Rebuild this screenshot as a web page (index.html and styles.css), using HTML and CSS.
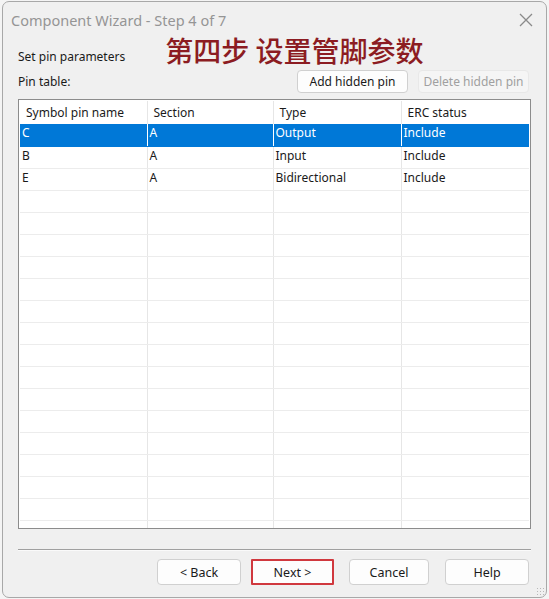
FILE: index.html
```html
<!DOCTYPE html>
<html lang="en">
  <head>
    <meta charset="UTF-8" />
    <title>Component Wizard</title>
    <link rel="stylesheet" href="styles.css">
  </head>

  <body>
    <section class="vindue">
      <header class="titellinje">
        <span class="titel">Component Wizard - Step 4 of 7</span>
        <svg class="luk" width="14" height="14" viewBox="0 0 14 14">
          <path d="M1 1 L13 13 M13 1 L1 13" stroke="#8a8a8a" stroke-width="1.3" fill="none" />
        </svg>
      </header>

      <div class="indhold">
        <div class="trin">
          <span>Set pin parameters</span>
          <h1>第四步 设置管脚参数</h1>
        </div>

        <div class="tabelhoved">
          <span>Pin table:</span>
          <div class="knapper">
            <button class="knap">Add hidden pin</button>
            <button class="knap" disabled>Delete hidden pin</button>
          </div>
        </div>

        <div class="tabel">
          <table>
            <thead>
              <tr>
                <th>Symbol pin name</th>
                <th>Section</th>
                <th>Type</th>
                <th>ERC status</th>
              </tr>
            </thead>
            <tbody></tbody>
          </table>
        </div>

        <hr />

        <footer>
          <button class="knap tilbage">&lt; Back</button>
          <button class="knap naeste">Next &gt;</button>
          <button class="knap annuller">Cancel</button>
          <button class="knap">Help</button>
        </footer>
      </div>
      <div class="greb"></div>
    </section>

    <script>
      const pins = [
        ["C", "A", "Output", "Include"],
        ["B", "A", "Input", "Include"],
        ["E", "A", "Bidirectional", "Include"],
      ];

      const tbody = document.querySelector("tbody");
      for (let i = 0; i < 19; i++) {
        const tr = document.createElement("tr");
        if (i == 0) tr.classList.add("valgt");
        const pin = pins[i] || ["", "", "", ""];
        pin.forEach((tekst) => {
          const td = document.createElement("td");
          td.textContent = tekst;
          tr.appendChild(td);
        });
        tbody.appendChild(tr);
      }
    </script>
  </body>
</html>
```

FILE: styles.css
```css
* {
  box-sizing: border-box;
}

body {
  margin: 0;
  background-color: #f4f4f4;
  font-family: "Noto Sans", "Open Sans", sans-serif;
  font-size: 12px;
  color: #1a1a1a;
}

.vindue {
  position: relative;
  width: 545px;
  height: 597px;
  margin: 1px 0 0 2px;
  border: 1px solid #a8a8a8;
  border-radius: 7px;
  background-color: #f0f0f0;
}

.titellinje {
  display: flex;
  justify-content: space-between;
  align-items: center;
  height: 36px;
  padding: 0 13px 0 8px;
}

.titel {
  font-size: 14.5px;
  color: #959595;
}

.indhold {
  padding: 0 15px 0 15px;
}

.trin {
  display: flex;
  align-items: flex-end;
  height: 28px;
}

.trin span {
  padding-bottom: 1px;
}

.trin h1 {
  margin: 0 0 -1px 40px;
  font-family: "Noto Sans CJK SC", sans-serif;
  font-size: 28px;
  font-weight: 500;
  line-height: 34px;
  color: #8c1c22;
}

.tabelhoved {
  display: flex;
  justify-content: space-between;
  align-items: center;
  margin-top: 4px;
  padding-right: 2px;
}

.knapper {
  display: flex;
  gap: 10px;
}

.knap {
  width: 111px;
  height: 23px;
  padding: 0;
  font-family: inherit;
  font-size: 12px;
  color: #1a1a1a;
  background-color: #fdfdfd;
  border: 1px solid #d0d0d0;
  border-radius: 4px;
}

.knap:disabled {
  color: #a0a0a0;
  background-color: #f5f5f5;
  border-color: #e8e8e8;
}

.tabel {
  height: 430px;
  margin-top: 6px;
  border: 1px solid #8c8c8c;
  background-color: white;
  padding: 1px;
  overflow: hidden;
}

table {
  width: 100%;
  border-collapse: collapse;
  table-layout: fixed;
}

th, td {
  text-align: left;
  font-weight: normal;
  padding: 0 0 0 2px;
  border-right: 1px solid #e6e6e6;
  white-space: nowrap;
}

th {
  height: 23px;
  padding-left: 6px;
  padding-top: 0;
}

th:nth-child(1), td:nth-child(1) {
  width: 127px;
}

th:nth-child(2), td:nth-child(2) {
  width: 126px;
}

th:nth-child(3), td:nth-child(3) {
  width: 128px;
}

th:last-child, td:last-child {
  border-right: none;
}

td {
  height: 22px;
  line-height: 15px;
  padding-top: 0;
  padding-bottom: 4px;
  border-bottom: 1px solid #ececec;
}

tr.valgt td {
  background-color: #0078d7;
  color: white;
  border-right-color: white;
  border-bottom-color: #0078d7;
}

hr {
  margin: 20px 0 0 0;
  border: none;
  border-top: 1px solid #a0a0a0;
  border-bottom: 1px solid #fafafa;
}

footer {
  display: flex;
  justify-content: flex-end;
  margin-top: 8px;
  padding-right: 2px;
}

footer .knap {
  width: 84px;
  height: 26px;
  font-size: 12.5px;
}

footer .tilbage {
  margin-right: 10px;
}

footer .naeste {
  width: 83px;
  margin-right: 15px;
  border: 2px solid #d0383e;
  border-radius: 1px;
}

footer .annuller {
  width: 80px;
  margin-right: 16px;
}

.greb {
  position: absolute;
  right: 2px;
  bottom: 2px;
  width: 8px;
  height: 8px;
  background-image: radial-gradient(#b8b8b8 30%, transparent 40%);
  background-size: 3px 3px;
}
```
